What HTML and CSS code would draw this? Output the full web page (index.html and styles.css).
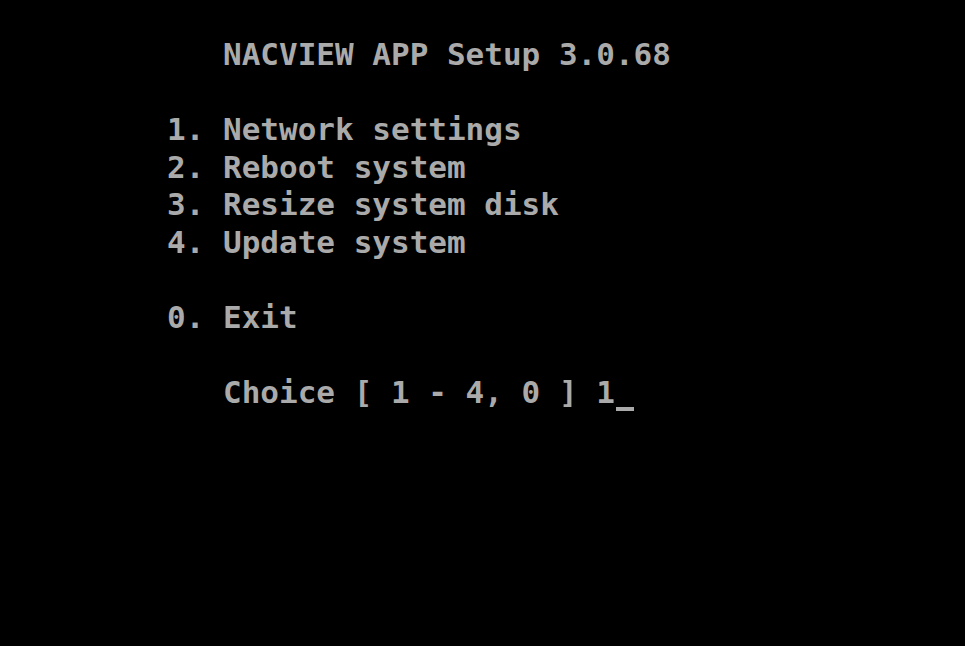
FILE: index.html
```html
<!DOCTYPE html>
<html lang="en">
<head>
  <title>NACVIEW APP Setup</title>
  <link rel="stylesheet" href="styles.css">
</head>
<body>

<!-- Console menu -->
<pre class="console">   NACVIEW APP Setup 3.0.68

1. Network settings
2. Reboot system
3. Resize system disk
4. Update system

0. Exit

   Choice [ 1 - 4, 0 ] 1<span class="cursor"></span></pre>

</body>
</html>
```

FILE: styles.css
```css
html, body {
  margin: 0;
  height: 100%;
  background: #000;
}
.console {
  margin: 0;
  padding: 36px 0 0 167px;
  font-family: "DejaVu Sans Mono", "Liberation Mono", monospace;
  font-weight: bold;
  font-size: 31px;
  line-height: 37.5px;
  color: #aaaaaa;
  white-space: pre;
}
.cursor {
  display: inline-block;
  width: 18px;
  height: 4px;
  margin-left: 1px;
  vertical-align: -8px;
  background: #aaaaaa;
}
```
